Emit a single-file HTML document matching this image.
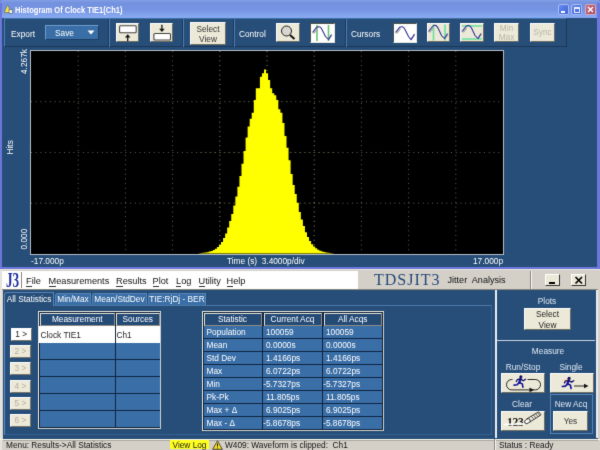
<!DOCTYPE html>
<html><head><meta charset="utf-8"><title>Histogram Of Clock TIE1(Ch1)</title>
<style>
html,body{margin:0;padding:0;}
body{width:600px;height:450px;position:relative;overflow:hidden;background:#274e78;font-family:"Liberation Sans",sans-serif;font-size:8.3px;color:#fff;}
.a{position:absolute;}
.t{position:absolute;white-space:nowrap;line-height:10px;height:10px;}
.c{text-align:center;}
.btn{position:absolute;background:#ece9d8;box-sizing:border-box;border:1px solid;border-color:#fff #6f6d62 #6f6d62 #fff;color:#222;text-align:center;}
.wbtn{position:absolute;background:#fff;box-sizing:border-box;border:1px solid;border-color:#505048 #e8e8e0 #e8e8e0 #505048;}
.sepd{position:absolute;width:1px;background:#1b3a5e;top:19px;height:28px;}
.sepl{position:absolute;width:1px;background:#4a7cb4;top:19px;height:28px;}
.dis{color:#b9b5a6;}
.hdr{position:absolute;box-sizing:border-box;background:#244a76;border:1px solid;border-color:#e4e2d8 #8e8c84 #8e8c84 #e4e2d8;color:#fff;text-align:center;line-height:11px;}
.row{position:absolute;background:#3a6ea6;}
.nb{position:absolute;box-sizing:border-box;background:#ece9d8;border:1px solid;border-color:#fff #77756a #77756a #fff;color:#b4b0a2;text-align:center;line-height:10px;width:21px;height:13px;left:10px;}
.tab{position:absolute;top:293px;height:12px;background:#3a6ea6;box-sizing:border-box;border:1px solid #5584b8;border-bottom:none;line-height:11px;text-align:center;border-radius:3px 0 0 0;}
.m{position:absolute;top:274.5px;font-size:9.2px;color:#111;line-height:12px;white-space:nowrap;}
.m u{text-decoration:none;border-bottom:1px solid #333;}
.sv{position:absolute;line-height:13px;height:13px;white-space:nowrap;}
#w{position:absolute;left:0;top:0;width:600px;height:450px;overflow:hidden;background:#274e78;filter:url(#soft);}
</style></head><body><svg width="0" height="0" style="position:absolute"><defs><filter id="soft" x="0" y="0" width="100%" height="100%" color-interpolation-filters="sRGB"><feConvolveMatrix order="3" kernelMatrix="0.01 0.08 0.01 0.08 0.64 0.08 0.01 0.08 0.01" edgeMode="duplicate" preserveAlpha="true"/></filter></defs></svg><div id="w">

<!-- ===== top window title bar ===== -->
<div class="a" style="left:0;top:0;width:600px;height:6px;background:#6a82c4;"></div>
<div class="a" style="left:0;top:0;width:600px;height:18px;background:linear-gradient(#849fe6 0px,#7391de 3px,#7694e2 10px,#88aaf2 17px,#82a2ea 18px);border-radius:2.5px 2.5px 0 0;"></div>
<div class="a" style="left:0;top:3px;width:2.4px;height:266px;background:#6c76dc;"></div>
<div class="a" style="left:597.4px;top:3px;width:2.6px;height:266px;background:#6c76dc;"></div>
<div class="a" style="left:0;top:266.8px;width:600px;height:2.4px;background:#6c76dc;"></div>
<!-- title icon -->
<svg class="a" style="left:4px;top:4px" width="10" height="11" viewBox="0 0 10 11"><path d="M3.6 0.8L0.3 8.5H7z" fill="#f4e84a" stroke="#555" stroke-width="0.5"/><rect x="5" y="5.6" width="3.6" height="3.8" fill="#eee" stroke="#555" stroke-width="0.6"/></svg>
<div class="t" style="left:15px;top:4.7px;font-weight:bold;font-size:8.5px;color:#fff;transform-origin:0 0;transform:scaleX(0.885);">Histogram Of Clock TIE1(Ch1)</div>
<!-- window buttons -->
<div class="a" style="left:558px;top:4px;width:11px;height:11px;border-radius:2px;background:linear-gradient(135deg,#6a8eee,#3a5ed8);border:0.5px solid #a8bcf4;box-sizing:border-box;"></div>
<div class="a" style="left:561px;top:11px;width:4px;height:2px;background:#fff;"></div>
<div class="a" style="left:571px;top:4px;width:11px;height:11px;border-radius:2px;background:linear-gradient(135deg,#6a8eee,#3a5ed8);border:0.5px solid #a8bcf4;box-sizing:border-box;"></div>
<div class="a" style="left:573.5px;top:6.5px;width:6px;height:6px;box-sizing:border-box;border:1px solid #e8eeff;border-top-width:2px;"></div>
<div class="a" style="left:585px;top:4px;width:11px;height:11px;border-radius:2px;background:linear-gradient(135deg,#c66e84,#a84c66);border:0.5px solid #d8a8b8;box-sizing:border-box;"></div>
<svg class="a" style="left:585px;top:4px" width="11" height="11"><path d="M3 3L8 8M8 3L3 8" stroke="#fff" stroke-width="1.4"/></svg>

<!-- ===== toolbar ===== -->
<div class="a" style="left:4px;top:18px;width:563px;height:29px;box-sizing:border-box;border:1px solid;border-color:#3d72ac #1a3757 #1a3757 #4a80bc;background:#274e78;"></div>
<div class="t" style="left:11px;top:29px;">Export</div>
<div class="a" style="left:45px;top:25px;width:54px;height:15px;box-sizing:border-box;background:#3a6ea6;border:1px solid;border-color:#6a9ad0 #1d3f66 #1d3f66 #6a9ad0;"></div>
<div class="t" style="left:55px;top:28px;">Save</div>
<svg class="a" style="left:87px;top:30px" width="8" height="5"><path d="M0.5 0.5H7.5L4 4.5z" fill="#fff"/></svg>
<div class="sepd" style="left:108px"></div><div class="sepl" style="left:109px"></div>
<div class="sepd" style="left:182px"></div><div class="sepl" style="left:183px"></div>
<div class="sepd" style="left:233px"></div><div class="sepl" style="left:234px"></div>
<div class="sepd" style="left:345px"></div><div class="sepl" style="left:346px"></div>

<div class="btn" style="left:116px;top:23px;width:23px;height:19px;"></div>
<svg class="a" style="left:116px;top:23px" width="23" height="19"><rect x="3.6" y="2.8" width="16.6" height="7" rx="1" fill="#fff" stroke="#444" stroke-width="1.1"/><path d="M11.7 18.3V13.5" stroke="#111" stroke-width="1.3"/><path d="M8.9 14.4L11.7 11.2L14.5 14.4z" fill="#111"/></svg>
<div class="btn" style="left:150px;top:23px;width:23px;height:19px;"></div>
<svg class="a" style="left:150px;top:23px" width="23" height="19"><rect x="3.9" y="10.5" width="16.6" height="6.5" rx="1" fill="#fff" stroke="#444" stroke-width="1.1"/><path d="M11.9 1.8V6.5" stroke="#111" stroke-width="1.3"/><path d="M9.1 5.7L11.9 8.9L14.7 5.7z" fill="#111"/></svg>

<div class="btn" style="left:190px;top:22px;width:36px;height:23px;line-height:10.5px;padding-top:0.5px;color:#333;">Select<br>View</div>
<div class="t" style="left:239px;top:29px;">Control</div>
<div class="btn" style="left:276px;top:23px;width:24px;height:19px;"></div>
<svg class="a" style="left:276px;top:23px" width="24" height="19"><circle cx="10.5" cy="8" r="5" fill="#d8d6ce" stroke="#222" stroke-width="1"/><path d="M14 12L18.5 16" stroke="#111" stroke-width="2"/></svg>

<div class="wbtn" style="left:310px;top:23px;width:25px;height:20px;"></div>
<svg class="a" style="left:310px;top:23px" width="25" height="20"><path d="M7 2V18M18.5 2V18" stroke="#6cc070" stroke-width="1.6"/><path d="M3.5 10.5L7.5 5.5" stroke="#aaa" stroke-width="1.3"/><path d="M18.5 17L22 12" stroke="#aaa" stroke-width="1.3"/><path d="M2.5 9.5L6.5 4.5C8.5 3 10.5 3.5 12 6.5L15.5 13.5L18.5 16.5L21.5 11.5" stroke="#2a2a92" stroke-width="1.05" fill="none"/></svg>

<div class="t" style="left:351px;top:29px;">Cursors</div>
<div class="wbtn" style="left:393px;top:23px;width:24px;height:20px;"></div>
<svg class="a" style="left:393px;top:23px" width="24" height="20"><path d="M3.5 10.5L7.5 5.5" stroke="#aaa" stroke-width="1.3"/><path d="M18 17L21.5 12" stroke="#aaa" stroke-width="1.3"/><path d="M2.5 9.5L6.5 4.5C8.5 3 10.5 3.5 12 6.5L15.5 13.5L18 16.5L21.5 11" stroke="#2a2a92" stroke-width="1.05" fill="none"/></svg>
<div class="btn" style="left:427px;top:23px;width:23px;height:19px;"></div>
<svg class="a" style="left:427px;top:23px" width="23" height="19"><path d="M6.5 1.5V17.5M18 1.5V17.5" stroke="#66e09a" stroke-width="1.6"/><path d="M2.5 9.5L6 5" stroke="#aaa" stroke-width="1.3"/><path d="M17.5 16.5L21 11.5" stroke="#aaa" stroke-width="1.3"/><path d="M1.5 8.5L5.5 3.5C7.5 1.5 9.5 2 11 5L14.5 12.5L17.5 15.5L20.5 10.5" stroke="#2a2a92" stroke-width="1.05" fill="none"/></svg>
<div class="btn" style="left:460px;top:23px;width:24px;height:19px;"></div>
<svg class="a" style="left:460px;top:23px" width="24" height="19"><path d="M2 3H22M2 16H22" stroke="#66e09a" stroke-width="1.6"/><path d="M3 9.5L6.5 5" stroke="#aaa" stroke-width="1.3"/><path d="M18 16L21.5 11" stroke="#aaa" stroke-width="1.3"/><path d="M2 8.5L6 3.5C8 1.8 10 2.2 11.5 5L15 12.5L18 15.5L21 10.5" stroke="#2a2a92" stroke-width="1.05" fill="none"/></svg>
<div class="btn dis" style="left:494px;top:23px;width:25px;height:19px;line-height:8.5px;padding-top:0px;">Min<br>Max</div>
<div class="btn dis" style="left:530px;top:23px;width:25px;height:19px;line-height:17px;">Sync</div>

<!-- ===== plot ===== -->
<div class="a" style="left:30px;top:50px;width:473.5px;height:204.5px;background:#000;box-sizing:border-box;border:1px solid #b4bcc4;"></div>
<svg class="a" style="left:0;top:0" width="600" height="270">
<g stroke="#8a8a7a" stroke-width="0.9" stroke-dasharray="0.9 3.82" fill="none" opacity="0.85">
<path d="M78.2 51V253M125.4 51V253M172.6 51V253M219.8 51V253M267 51V253M314.2 51V253M361.4 51V253M408.6 51V253M455.8 51V253"/>
<path d="M31 101.7H503M31 152.5H503M31 203.2H503"/>
</g>
<path d="M198.50 253.60V253.20H200.54V253.03H202.59V252.79H204.64V252.51H206.68V252.14H208.73V251.61H210.78V250.98H212.83V250.00H214.87V248.66H216.92V246.93H218.97V244.85H221.01V241.97H223.06V237.88H225.11V233.43H227.15V227.44H229.20V220.93H231.25V213.97H233.30V205.54H235.34V196.52H237.39V186.65H239.44V176.02H241.48V163.78H243.53V151.03H245.58V137.49H247.62V126.44H249.67V118.70H251.72V112.70H253.77V100.00H255.81V88.30H257.86V88.30H259.91V76.70H261.95V73.30H264.00V69.60H266.05V73.30H268.09V80.00H270.14V88.30H272.19V93.30H274.24V95.30H276.28V100.00H278.33V109.30H280.38V112.77H282.42V122.97H284.47V136.05H286.52V147.66H288.56V160.29H290.61V174.12H292.66V185.10H294.71V193.98H296.75V202.72H298.80V212.12H300.85V219.54H302.89V226.12H304.94V232.13H306.99V237.00H309.03V241.03H311.08V244.19H313.13V246.44H315.18V248.30H317.22V249.69H319.27V250.73H321.32V251.49H323.36V252.01H325.41V252.42H327.46V252.74H329.50V252.98H331.55V253.16H333.60V253.60Z" fill="#ffff00"/>
<g stroke="#ffff9a" stroke-width="0.8" stroke-dasharray="0.8 3.92" fill="none" opacity="0.35">
<path d="M219.8 51V253M267 51V253M314.2 51V253"/><path d="M200 152.5H335M200 203.2H335M240 101.7H290"/>
</g>
</svg>
<div class="t" style="left:0px;top:0px;transform-origin:0 0;transform:translate(18.6px,74px) rotate(-90deg);">4.267k</div>
<div class="t" style="left:0px;top:0px;transform-origin:0 0;transform:translate(4.6px,154.5px) rotate(-90deg);">Hits</div>
<div class="t" style="left:0px;top:0px;transform-origin:0 0;transform:translate(18.6px,249.5px) rotate(-90deg);">0.000</div>
<div class="t" style="left:31px;top:255.5px;">-17.000p</div>
<div class="t" style="left:227px;top:255.5px;">Time (s)&nbsp; 3.4000p/div</div>
<div class="t" style="left:473px;top:255.5px;">17.000p</div>

<!-- ===== bottom window ===== -->
<div class="a" style="left:0;top:269px;width:600px;height:181px;background:#d4d0c8;"></div>
<div class="a" style="left:2.5px;top:290px;width:595px;height:148.5px;background:#274e78;"></div>
<div class="a" style="left:2.4px;top:270.6px;width:356px;height:18.6px;background:#fff;"></div>
<div class="a" style="left:2px;top:289px;width:596px;height:1px;background:#8a8880;"></div>
<div class="a" style="left:0px;top:269px;width:600px;height:1.2px;background:#e6e4de;"></div>
<!-- J3 logo -->
<div class="a" style="left:5.5px;top:268px;font-family:'Liberation Serif',serif;font-size:22px;line-height:24px;color:#1c2a9c;font-weight:bold;transform-origin:0 0;transform:scaleX(0.6);">J3</div>
<div class="a" style="left:21px;top:272px;width:1px;height:16px;background:#8a8880;"></div>
<div class="m" style="left:26px"><u>F</u>ile</div>
<div class="m" style="left:48.5px"><u>M</u>easurements</div>
<div class="m" style="left:116px"><u>R</u>esults</div>
<div class="m" style="left:152.5px"><u>P</u>lot</div>
<div class="m" style="left:176px"><u>L</u>og</div>
<div class="m" style="left:198.5px"><u>U</u>tility</div>
<div class="m" style="left:226.5px"><u>H</u>elp</div>
<div class="a" style="left:374px;top:269.5px;font-family:'Liberation Serif',serif;font-size:16px;line-height:19px;color:#24487a;letter-spacing:1px;">TDSJIT3</div>
<div class="a" style="left:447.5px;top:273.5px;font-size:9.1px;line-height:12px;color:#111;white-space:pre;">Jitter  Analysis</div>
<div class="a" style="left:530px;top:271px;width:1px;height:18px;background:#8a8880;"></div>
<div class="a" style="left:531px;top:271px;width:1px;height:18px;background:#f8f8f4;"></div>
<div class="a" style="left:544.5px;top:273.5px;width:15px;height:12.5px;box-sizing:border-box;background:#ece9d8;border:1px solid;border-color:#fff #333 #333 #fff;"></div>
<div class="a" style="left:548.5px;top:282px;width:6px;height:1.5px;background:#000;"></div>
<div class="a" style="left:570.5px;top:273.5px;width:15.5px;height:12.5px;box-sizing:border-box;background:#ece9d8;border:1px solid;border-color:#fff #333 #333 #fff;"></div>
<svg class="a" style="left:570.5px;top:273.5px" width="16" height="13"><path d="M4.5 3L11 9.5M11 3L4.5 9.5" stroke="#000" stroke-width="1.7"/></svg>

<!-- tabs -->
<div class="a" style="left:4px;top:304.5px;width:488px;height:130px;box-sizing:border-box;border:1px solid #335f90;border-top:1.5px solid #4a78a8;border-left-color:#5a8cc4;"></div>
<div class="tab" style="left:4px;top:292px;width:50px;height:14px;background:#274e78;line-height:13px;">All Statistics</div>
<div class="tab" style="left:55px;width:36px;">Min/Max</div>
<div class="tab" style="left:92px;width:55px;">Mean/StdDev</div>
<div class="tab" style="left:148px;width:58px;">TIE:RjDj - BER</div>

<!-- measurement table -->
<div class="a" style="left:38px;top:311px;width:123px;height:118px;box-sizing:border-box;border:1px solid;border-color:#e8e6dc #d0cec4 #d0cec4 #e8e6dc;background:#10243e;"></div>
<div class="hdr" style="left:40px;top:312.5px;width:74.5px;height:13px;">Measurement</div>
<div class="hdr" style="left:116px;top:312.5px;width:43.5px;height:13px;">Sources</div>
<div class="a" style="left:39px;top:326px;width:76px;height:16.5px;background:#fff;"></div>
<div class="a" style="left:116px;top:326px;width:44px;height:16.5px;background:#fff;"></div>
<div class="t" style="left:40.5px;top:330px;color:#222;">Clock TIE1</div>
<div class="t" style="left:116.5px;top:330px;color:#222;">Ch1</div>
<div class="row" style="left:39.5px;top:343.0px;width:75.5px;height:16.0px;"></div>
<div class="row" style="left:116px;top:343.0px;width:44px;height:16.0px;"></div>
<div class="row" style="left:39.5px;top:360.0px;width:75.5px;height:16.0px;"></div>
<div class="row" style="left:116px;top:360.0px;width:44px;height:16.0px;"></div>
<div class="row" style="left:39.5px;top:377.0px;width:75.5px;height:16.0px;"></div>
<div class="row" style="left:116px;top:377.0px;width:44px;height:16.0px;"></div>
<div class="row" style="left:39.5px;top:394.0px;width:75.5px;height:16.0px;"></div>
<div class="row" style="left:116px;top:394.0px;width:44px;height:16.0px;"></div>
<div class="row" style="left:39.5px;top:411.0px;width:75.5px;height:16.0px;"></div>
<div class="row" style="left:116px;top:411.0px;width:44px;height:16.0px;"></div>
<div class="nb" style="top:328px;background:#fff;color:#222;height:12.5px;left:11px;width:20.5px;">1 &gt;</div>
<div class="nb" style="top:345px;">2 &gt;</div>
<div class="nb" style="top:362px;">3 &gt;</div>
<div class="nb" style="top:379.5px;">4 &gt;</div>
<div class="nb" style="top:396.5px;">5 &gt;</div>
<div class="nb" style="top:414px;">6 &gt;</div>

<!-- statistics table -->
<div class="a" style="left:202px;top:311px;width:181.5px;height:119.5px;box-sizing:border-box;border:1px solid;border-color:#e8e6dc #d0cec4 #d0cec4 #e8e6dc;background:#10243e;"></div>
<div class="hdr" style="left:203.5px;top:312.5px;width:58px;height:13px;">Statistic</div>
<div class="hdr" style="left:263.5px;top:312.5px;width:58px;height:13px;">Current Acq</div>
<div class="hdr" style="left:323.5px;top:312.5px;width:58.5px;height:13px;">All Acqs</div>
<div class="row" style="left:203.5px;top:326.0px;width:58.2px;height:12.2px;"></div>
<div class="row" style="left:262.8px;top:326.0px;width:59.4px;height:12.2px;"></div>
<div class="row" style="left:323.2px;top:326.0px;width:59px;height:12.2px;"></div>
<div class="sv" style="left:206.5px;top:326.0px;">Population</div>
<div class="sv" style="left:266.0px;top:326.0px;">100059</div>
<div class="sv" style="left:326.0px;top:326.0px;">100059</div>
<div class="row" style="left:203.5px;top:339.0px;width:58.2px;height:12.2px;"></div>
<div class="row" style="left:262.8px;top:339.0px;width:59.4px;height:12.2px;"></div>
<div class="row" style="left:323.2px;top:339.0px;width:59px;height:12.2px;"></div>
<div class="sv" style="left:206.5px;top:339.0px;">Mean</div>
<div class="sv" style="left:266.0px;top:339.0px;">0.0000s</div>
<div class="sv" style="left:326.0px;top:339.0px;">0.0000s</div>
<div class="row" style="left:203.5px;top:352.0px;width:58.2px;height:12.2px;"></div>
<div class="row" style="left:262.8px;top:352.0px;width:59.4px;height:12.2px;"></div>
<div class="row" style="left:323.2px;top:352.0px;width:59px;height:12.2px;"></div>
<div class="sv" style="left:206.5px;top:352.0px;">Std Dev</div>
<div class="sv" style="left:266.0px;top:352.0px;">1.4166ps</div>
<div class="sv" style="left:326.0px;top:352.0px;">1.4166ps</div>
<div class="row" style="left:203.5px;top:365.0px;width:58.2px;height:12.2px;"></div>
<div class="row" style="left:262.8px;top:365.0px;width:59.4px;height:12.2px;"></div>
<div class="row" style="left:323.2px;top:365.0px;width:59px;height:12.2px;"></div>
<div class="sv" style="left:206.5px;top:365.0px;">Max</div>
<div class="sv" style="left:266.0px;top:365.0px;">6.0722ps</div>
<div class="sv" style="left:326.0px;top:365.0px;">6.0722ps</div>
<div class="row" style="left:203.5px;top:378.0px;width:58.2px;height:12.2px;"></div>
<div class="row" style="left:262.8px;top:378.0px;width:59.4px;height:12.2px;"></div>
<div class="row" style="left:323.2px;top:378.0px;width:59px;height:12.2px;"></div>
<div class="sv" style="left:206.5px;top:378.0px;">Min</div>
<div class="sv" style="left:263.2px;top:378.0px;">-5.7327ps</div>
<div class="sv" style="left:323.2px;top:378.0px;">-5.7327ps</div>
<div class="row" style="left:203.5px;top:391.0px;width:58.2px;height:12.2px;"></div>
<div class="row" style="left:262.8px;top:391.0px;width:59.4px;height:12.2px;"></div>
<div class="row" style="left:323.2px;top:391.0px;width:59px;height:12.2px;"></div>
<div class="sv" style="left:206.5px;top:391.0px;">Pk-Pk</div>
<div class="sv" style="left:266.0px;top:391.0px;">11.805ps</div>
<div class="sv" style="left:326.0px;top:391.0px;">11.805ps</div>
<div class="row" style="left:203.5px;top:404.0px;width:58.2px;height:12.2px;"></div>
<div class="row" style="left:262.8px;top:404.0px;width:59.4px;height:12.2px;"></div>
<div class="row" style="left:323.2px;top:404.0px;width:59px;height:12.2px;"></div>
<div class="sv" style="left:206.5px;top:404.0px;">Max + Δ</div>
<div class="sv" style="left:266.0px;top:404.0px;">6.9025ps</div>
<div class="sv" style="left:326.0px;top:404.0px;">6.9025ps</div>
<div class="row" style="left:203.5px;top:417.0px;width:58.2px;height:12.2px;"></div>
<div class="row" style="left:262.8px;top:417.0px;width:59.4px;height:12.2px;"></div>
<div class="row" style="left:323.2px;top:417.0px;width:59px;height:12.2px;"></div>
<div class="sv" style="left:206.5px;top:417.0px;">Max - Δ</div>
<div class="sv" style="left:263.2px;top:417.0px;">-5.8678ps</div>
<div class="sv" style="left:323.2px;top:417.0px;">-5.8678ps</div>

<!-- right panel -->
<div class="a" style="left:495px;top:290px;width:1.5px;height:148px;background:#e8ecf2;"></div>
<div class="a" style="left:596px;top:290px;width:1.5px;height:148px;background:#e8ecf2;"></div>
<div class="a" style="left:497px;top:339.5px;width:98px;height:1px;background:#c8d4e4;"></div>
<div class="t c" style="left:517px;top:296px;width:60px;color:#dfe8f4;">Plots</div>
<div class="btn" style="left:524px;top:308px;width:47px;height:22px;line-height:10.5px;color:#222;">Select<br>View</div>
<div class="t c" style="left:518px;top:346px;width:60px;color:#dfe8f4;">Measure</div>
<div class="t c" style="left:493px;top:362px;width:60px;color:#dfe8f4;">Run/Stop</div>
<div class="t c" style="left:541px;top:362px;width:60px;color:#dfe8f4;">Single</div>
<div class="btn" style="left:501px;top:373px;width:44px;height:19.5px;"></div>
<svg class="a" style="left:501px;top:373px" width="44" height="20"><rect x="5.5" y="6.5" width="34" height="10.4" rx="5.2" fill="none" stroke="#111" stroke-width="0.9"/><rect x="11.5" y="4" width="15" height="5" fill="#ece9d8"/><path d="M28.5 14.6L33 16.9L28.5 19.2z" fill="#111"/><g transform="translate(12.3,2.3)" fill="none" stroke-linecap="round" stroke-linejoin="round"><circle cx="7.6" cy="1.5" r="1.5" fill="#0c0c50" stroke="none"/><path d="M7.2 3.4L6 7.2" stroke="#1818b8" stroke-width="2.4"/><path d="M7 3.6L4 4.4L3 6.2M7.4 3.8L10 5.4L12.2 4" stroke="#0c0c60" stroke-width="1.3"/><path d="M6 7.2L9 8.6L9.6 11.8M6 7.4L3.8 9.4L0.8 9.8" stroke="#101090" stroke-width="1.6"/></g></svg>
<div class="btn" style="left:549.5px;top:373px;width:44px;height:19.5px;"></div>
<svg class="a" style="left:549.5px;top:373px" width="44" height="20"><path d="M24 13H35" stroke="#111" stroke-width="0.9"/><path d="M34 10.8L38.5 13L34 15.2z" fill="#111"/><g transform="translate(11.5,3.7)" fill="none" stroke-linecap="round" stroke-linejoin="round"><circle cx="7.6" cy="1.5" r="1.5" fill="#0c0c50" stroke="none"/><path d="M7.2 3.4L6 7.2" stroke="#1818b8" stroke-width="2.4"/><path d="M7 3.6L4 4.4L3 6.2M7.4 3.8L10 5.4L12.2 4" stroke="#0c0c60" stroke-width="1.3"/><path d="M6 7.2L9 8.6L9.6 11.8M6 7.4L3.8 9.4L0.8 9.8" stroke="#101090" stroke-width="1.6"/><path d="M5.5 3.6L3.4 4.6" stroke="#a03030" stroke-width="1.2"/></g></svg>
<div class="t c" style="left:492px;top:399px;width:60px;color:#dfe8f4;">Clear</div>
<div class="btn" style="left:501px;top:411px;width:44px;height:19.5px;"></div>
<div class="a" style="left:507px;top:413.5px;font-family:'Liberation Serif',serif;font-weight:bold;font-size:11.5px;line-height:16px;color:#111;letter-spacing:-0.3px;">123</div>
<svg class="a" style="left:501px;top:411px" width="44" height="20"><path d="M4 13.6L22.5 13" stroke="#fff" stroke-width="2" stroke-linecap="round" opacity="0.9"/><path d="M26 7.8L37.6 0.8L40 3.8L28.6 11.2z" fill="#ece9d8" stroke="#111" stroke-width="0.8"/><ellipse cx="26.4" cy="10.2" rx="3" ry="2.1" transform="rotate(-32 26.4 10.2)" fill="#fff" stroke="#111" stroke-width="0.8"/><path d="M30.5 5.2L32.8 8.4M32.6 3.9L34.9 7.1M34.7 2.6L37 5.8M36.6 1.5L38.8 4.6" stroke="#111" stroke-width="0.55"/></svg>
<div class="a" style="left:549.5px;top:394px;width:43px;height:40px;box-sizing:border-box;border:1px solid #5a84b8;"></div>
<div class="t c" style="left:541px;top:399px;width:60px;color:#dfe8f4;">New Acq</div>
<div class="btn" style="left:553px;top:411px;width:35px;height:19.5px;line-height:19px;color:#333;">Yes</div>

<!-- status bar -->
<div class="a" style="left:0;top:269px;width:1.6px;height:181px;background:#e4e2dc;"></div>
<div class="a" style="left:2.5px;top:440.1px;width:491px;height:0.8px;background:#a8a69c;"></div>
<div class="a" style="left:496px;top:440.1px;width:102px;height:0.8px;background:#a8a69c;"></div>
<div class="a" style="left:0px;top:438.5px;width:600px;height:1.6px;background:#f6f4ee;"></div>
<div class="a" style="left:494px;top:439px;width:1px;height:11px;background:#8a8880;"></div>
<div class="a" style="left:495px;top:439px;width:1px;height:11px;background:#f8f8f4;"></div>
<div class="t" style="left:6px;top:439.5px;color:#111;">Menu: Results-&gt;All Statistics</div>
<div class="a" style="left:170px;top:439.7px;width:39px;height:9.3px;background:#ffff20;"></div>
<div class="t" style="left:172.5px;top:439.5px;color:#222;">View Log</div>
<svg class="a" style="left:211.5px;top:439.5px" width="11" height="10"><path d="M5.5 0.8L10.3 9.3H0.7z" fill="#f6e020" stroke="#222" stroke-width="0.8"/><path d="M5.5 3.5V6.5M5.5 7.5V8.4" stroke="#111" stroke-width="1"/></svg>
<div class="t" style="left:225px;top:439.5px;color:#111;white-space:pre;">W409: Waveform is clipped:  Ch1</div>
<div class="t" style="left:499px;top:439.5px;color:#111;">Status : Ready</div>
</div></body></html>
